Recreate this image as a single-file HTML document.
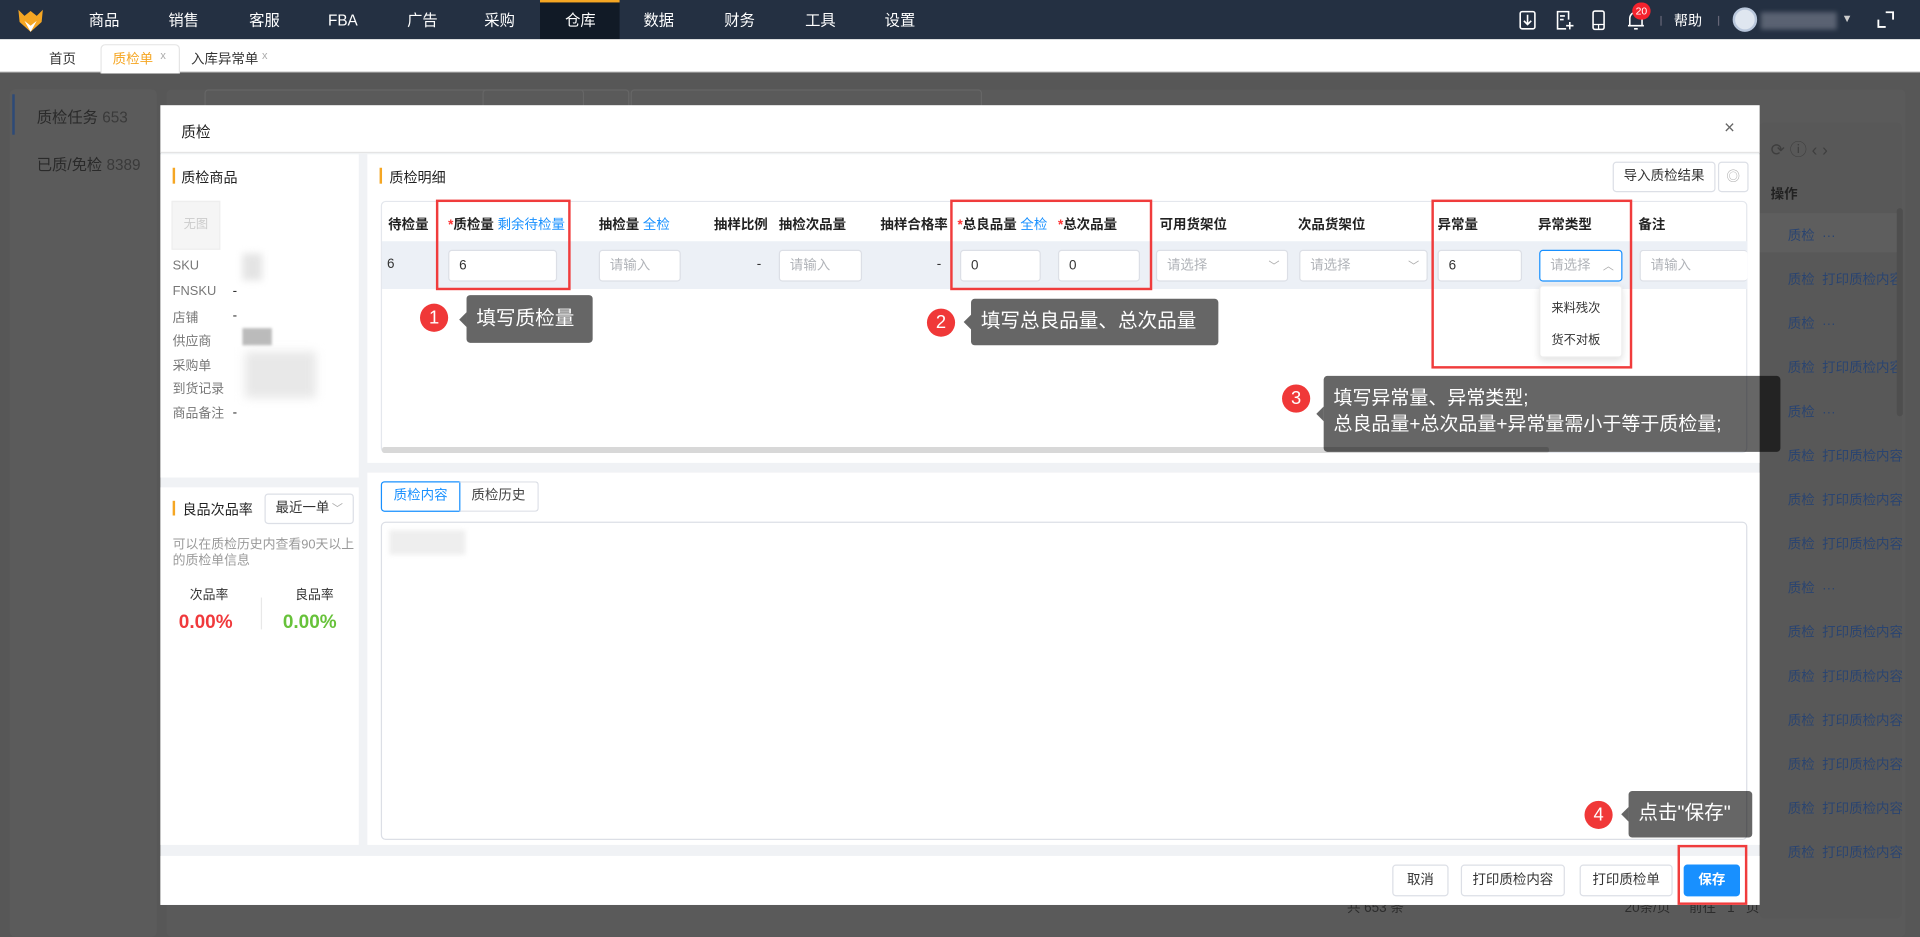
<!DOCTYPE html>
<html><head><meta charset="utf-8">
<style>
*{box-sizing:border-box;margin:0;padding:0}
html,body{width:1920px;height:937px;overflow:hidden;background:#575757}
#w{position:absolute;left:0;top:0;width:1568px;height:765px;transform:scale(1.224490);transform-origin:0 0;font-family:"Liberation Sans","Noto Sans CJK SC",sans-serif;font-size:11px;color:#333;background:#575757}
.a{position:absolute}
.nav{left:0;top:0;width:1568px;height:32px;background:#243042}
.ni{top:0;height:32px;line-height:34px;color:#fff;font-size:12.5px;text-align:center;width:64px}
.tabbar{left:0;top:32px;width:1568px;height:27px;background:#fff;border-bottom:1px solid #ddd}
.modal{left:131px;top:86px;width:1306px;height:653px;background:#f0f2f5}
.wh{background:#fff}
.inp{background:#fff;border:1px solid #dcdfe6;border-radius:3px;height:26px;line-height:24px;padding-left:8px;font-size:11px;color:#333}
.ph{color:#b0b3b8}
.th{top:175px;font-size:11px;color:#222;font-weight:bold}
.blue{color:#1890ff;font-weight:normal}
.req{color:#f33}
.rb{border:2px solid #f03c3c}
.circ{width:23px;height:23px;border-radius:50%;background:#f03838;color:#fff;text-align:center;line-height:23px;font-size:15px}
.tip{background:rgba(0,0,0,.6);color:#fff;border-radius:3px;font-size:16px}
.tip:before{content:"";position:absolute;left:-6px;top:50%;margin-top:-6px;border:6px solid transparent;border-left:0;border-right-color:rgba(0,0,0,.6)}
.lbl{left:141px;font-size:10.5px;color:#777}
.btn{top:706px;height:26px;line-height:24px;border:1px solid #dcdfe6;border-radius:3px;background:#fff;text-align:center;font-size:11px;color:#333}
.bg{color:#2a4470;font-size:11px}
.arr{color:#aaa;font-size:9px}
</style></head><body><div id="w">
<div class="a nav"></div>
<svg class="a" style="left:14px;top:6px" width="22" height="22" viewBox="0 0 22 22"><path d="M1 2 L6 7 L11 3 L16 7 L21 2 L20 12 L11 20 L2 12Z" fill="#f5a623"/><path d="M6 11 L11 15 L16 11 L11 20Z" fill="#fff"/></svg>
<div class="a ni" style="left:53px">商品</div><div class="a ni" style="left:118px">销售</div><div class="a ni" style="left:184px">客服</div><div class="a ni" style="left:248px">FBA</div><div class="a ni" style="left:313px">广告</div><div class="a ni" style="left:376px">采购</div>
<div class="a" style="left:441px;top:0;width:65px;height:32px;background:#111a26;border-top:2px solid #f5a623"></div><div class="a ni" style="left:442px">仓库</div>
<div class="a ni" style="left:506px">数据</div><div class="a ni" style="left:572px">财务</div><div class="a ni" style="left:638px">工具</div><div class="a ni" style="left:703px">设置</div>
<svg class="a" style="left:1240px;top:8px" width="16" height="17"><rect x="1.5" y="1.5" width="12" height="14" rx="1.5" fill="none" stroke="#fff" stroke-width="1.3"/><path d="M7.5 4v8M4.5 9l3 3 3-3" stroke="#fff" fill="none" stroke-width="1.3"/></svg>
<svg class="a" style="left:1270px;top:8px" width="16" height="17"><path d="M11 8V1.5H2v14h7" fill="none" stroke="#fff" stroke-width="1.3"/><path d="M4 5h4M4 8h3M12 10v6M9 13h6" stroke="#fff" stroke-width="1.3"/></svg>
<svg class="a" style="left:1299px;top:8px" width="14" height="17"><rect x="2" y="1" width="9" height="15" rx="1.5" fill="none" stroke="#fff" stroke-width="1.3"/><path d="M2 12h9M6.5 12v4" stroke="#fff" stroke-width="1"/></svg>
<svg class="a" style="left:1328px;top:8px" width="16" height="17"><path d="M3 13V7a5 5 0 0 1 10 0v6zM1.5 13h13M6.5 15.5h3" fill="none" stroke="#fff" stroke-width="1.3"/></svg>
<div class="a" style="left:1333px;top:2px;width:15px;height:14px;border-radius:7px;background:#f5222d;color:#fff;font-size:8.5px;text-align:center;line-height:14px">20</div>
<div class="a" style="left:1356px;top:13px;width:1px;height:8px;background:#667"></div>
<div class="a" style="left:1367px;top:9px;color:#fff;font-size:11.5px">帮助</div>
<div class="a" style="left:1403px;top:13px;width:1px;height:8px;background:#667"></div>
<div class="a" style="left:1415px;top:6px;width:20px;height:20px;border-radius:50%;background:#dfe6f0;border:2px solid #b9c7dc"></div>
<div class="a" style="left:1438px;top:10px;width:62px;height:14px;background:#5a6272;filter:blur(2px)"></div>
<div class="a" style="left:1504px;top:10px;color:#ccc;font-size:9px">▼</div>
<svg class="a" style="left:1532px;top:8px" width="16" height="16"><path d="M2 8v6h6M14 8V2H8" fill="none" stroke="#fff" stroke-width="1.5"/></svg>
<div class="a tabbar"></div>
<div class="a" style="left:40px;top:40px;font-size:11px">首页</div>
<div class="a" style="left:82px;top:36px;width:65px;height:24px;background:#fff;border:1px solid #e5e5e5;border-bottom:none;border-radius:4px 4px 0 0"></div>
<div class="a" style="left:92px;top:40px;font-size:11px;color:#f5a623">质检单</div><div class="a" style="left:131px;top:40px;color:#aaa;font-size:9px">x</div>
<div class="a" style="left:156px;top:40px;font-size:11px">入库异常单</div><div class="a" style="left:214px;top:40px;color:#aaa;font-size:9px">x</div>
<!-- behind page -->
<div class="a" style="left:8px;top:73px;width:120px;height:692px;background:#5b5b5b;border-radius:4px"></div>
<div class="a" style="left:10px;top:77px;width:2px;height:33px;background:#2d4a78"></div>
<div class="a" style="left:30px;top:85px;font-size:12.5px;color:#2a2a2a">质检任务 <span style="color:#3a3a3a">653</span></div>
<div class="a" style="left:30px;top:124px;font-size:12.5px;color:#2a2a2a">已质/免检 <span style="color:#3a3a3a">8389</span></div>
<div class="a" style="left:136px;top:73px;width:1420px;height:692px;background:#5a5a5a;border-radius:4px"></div>
<div class="a" style="left:167px;top:73px;width:310px;height:24px;border:1px solid #666;border-radius:3px"></div>
<div class="a" style="left:394px;top:73px;width:120px;height:24px;border:1px solid #666;border-radius:3px"></div>
<div class="a" style="left:515px;top:73px;width:287px;height:24px;border:1px solid #666;border-radius:3px"></div>
<div class="a" style="left:1437px;top:100px;width:116px;height:650px;background:#585858;border-radius:4px"></div>
<div class="a" style="left:1446px;top:150px;font-size:11px;color:#222;font-weight:bold">操作</div>
<div class="a" style="left:1437px;top:174px;width:115px;height:32px;background:#5e5e5e"></div>
<div class="a bg" style="left:1446px;top:112px;font-size:14px;color:#3e3e3e">⟳ ⓘ ‹ ›</div>
<div class="a bg" style="left:1460px;top:184px">质检 &nbsp;···</div>
<div class="a bg" style="left:1460px;top:220px">质检 &nbsp;打印质检内容</div>
<div class="a bg" style="left:1460px;top:256px">质检 &nbsp;···</div>
<div class="a bg" style="left:1460px;top:292px">质检 &nbsp;打印质检内容</div>
<div class="a bg" style="left:1460px;top:328px">质检 &nbsp;···</div>
<div class="a bg" style="left:1460px;top:364px">质检 &nbsp;打印质检内容</div>
<div class="a bg" style="left:1460px;top:400px">质检 &nbsp;打印质检内容</div>
<div class="a bg" style="left:1460px;top:436px">质检 &nbsp;打印质检内容</div>
<div class="a bg" style="left:1460px;top:472px">质检 &nbsp;···</div>
<div class="a bg" style="left:1460px;top:508px">质检 &nbsp;打印质检内容</div>
<div class="a bg" style="left:1460px;top:544px">质检 &nbsp;打印质检内容</div>
<div class="a bg" style="left:1460px;top:580px">质检 &nbsp;打印质检内容</div>
<div class="a bg" style="left:1460px;top:616px">质检 &nbsp;打印质检内容</div>
<div class="a bg" style="left:1460px;top:652px">质检 &nbsp;打印质检内容</div>
<div class="a bg" style="left:1460px;top:688px">质检 &nbsp;打印质检内容</div>
<div class="a" style="left:1549px;top:170px;width:5px;height:170px;background:#4e4e4e;border-radius:3px"></div>
<div class="a" style="left:1100px;top:733px;color:#2c2c2c;font-size:11px">共 653 条 &nbsp;&nbsp;&nbsp;&nbsp;&nbsp;&nbsp;&nbsp;&nbsp;&nbsp;&nbsp;&nbsp;&nbsp;&nbsp;&nbsp;&nbsp;&nbsp;&nbsp;&nbsp;&nbsp;&nbsp;&nbsp;&nbsp;&nbsp;&nbsp;&nbsp;&nbsp;&nbsp;&nbsp;&nbsp;&nbsp;&nbsp;&nbsp;&nbsp;&nbsp;&nbsp;&nbsp;&nbsp;&nbsp;&nbsp;&nbsp;&nbsp;&nbsp;&nbsp;&nbsp;&nbsp;&nbsp;&nbsp;&nbsp;&nbsp;&nbsp;&nbsp;&nbsp;&nbsp;&nbsp;&nbsp;&nbsp;&nbsp;&nbsp;20条/页 &nbsp;&nbsp;&nbsp;&nbsp;前往 &nbsp;&nbsp;1&nbsp;&nbsp; 页</div>
<!-- modal -->
<div class="a modal"></div>
<div class="a wh" style="left:131px;top:86px;width:1306px;height:39px;border-bottom:1px solid #e4e4e4"></div>
<div class="a" style="left:148px;top:99px;font-size:12px;color:#222">质检</div>
<div class="a" style="left:1408px;top:96px;font-size:15px;color:#666">×</div>
<div class="a wh" style="left:131px;top:126px;width:162px;height:264px"></div>
<div class="a wh" style="left:131px;top:398px;width:162px;height:292px"></div>
<div class="a wh" style="left:300px;top:126px;width:1137px;height:252px"></div>
<div class="a wh" style="left:300px;top:386px;width:1137px;height:304px"></div>
<div class="a wh" style="left:131px;top:699px;width:1306px;height:40px"></div>
<!-- left panel -->
<div class="a" style="left:141px;top:137px;width:2px;height:13px;background:#f5a623"></div>
<div class="a" style="left:148px;top:137px;font-size:11.5px;color:#222">质检商品</div>
<div class="a" style="left:140px;top:164px;width:40px;height:40px;background:#f5f5f5;border:1px solid #eee;color:#ccc;font-size:10px;text-align:center;line-height:38px">无图</div>
<div class="a lbl" style="top:211px">SKU</div><div class="a lbl" style="top:232px">FNSKU</div><div class="a lbl" style="top:252px">店铺</div><div class="a lbl" style="top:271px">供应商</div><div class="a lbl" style="top:291px">采购单</div><div class="a lbl" style="top:310px">到货记录</div><div class="a lbl" style="top:330px">商品备注</div>
<div class="a" style="left:190px;top:232px">-</div><div class="a" style="left:190px;top:252px">-</div><div class="a" style="left:190px;top:331px">-</div>
<div class="a" style="left:198px;top:207px;width:16px;height:22px;background:#e4e4e4;filter:blur(3px)"></div>
<div class="a" style="left:198px;top:268px;width:24px;height:14px;background:#bbb;filter:blur(1px)"></div>
<div class="a" style="left:200px;top:287px;width:58px;height:38px;background:#e8e8e8;filter:blur(4px)"></div>
<div class="a" style="left:141px;top:409px;width:2px;height:12px;background:#f5a623"></div>
<div class="a" style="left:149px;top:408px;font-size:11.5px;color:#222">良品次品率</div>
<div class="a inp" style="left:216px;top:403px;width:73px;height:25px;line-height:23px">最近一单<span class="arr" style="position:absolute;right:8px">﹀</span></div>
<div class="a" style="left:141px;top:439px;width:150px;font-size:10.5px;color:#999;line-height:13px">可以在质检历史内查看90天以上的质检单信息</div>
<div class="a" style="left:155px;top:478px;font-size:10.5px">次品率</div><div class="a" style="left:241px;top:478px;font-size:10.5px">良品率</div>
<div class="a" style="left:213px;top:488px;width:1px;height:26px;background:#e8e8e8"></div>
<div class="a" style="left:146px;top:500px;font-size:15.5px;font-weight:bold;color:#f0393c">0.00%</div>
<div class="a" style="left:231px;top:500px;font-size:15.5px;font-weight:bold;color:#67c23a">0.00%</div>
<!-- right top -->
<div class="a" style="left:310px;top:137px;width:2px;height:13px;background:#f5a623"></div>
<div class="a" style="left:318px;top:137px;font-size:11.5px;color:#222">质检明细</div>
<div class="a inp" style="left:1317px;top:132px;width:84px;height:25px;line-height:23px;padding:0;text-align:center">导入质检结果</div>
<div class="a inp" style="left:1403px;top:132px;width:25px;height:25px;padding:0;text-align:center;color:#aaa">◎</div>
<div class="a" style="left:311px;top:164px;width:1116px;height:206px;border:1px solid #e4e7ed;border-radius:4px"></div>
<div class="a" style="left:312px;top:197px;width:1115px;height:39px;background:#ecf0f6"></div>
<div class="a" style="left:312px;top:365px;width:953px;height:5px;background:#d8d8d8;border-radius:2px"></div>
<div class="a th" style="left:317px">待检量</div>
<div class="a th" style="left:366px"><span class="req">*</span>质检量 <span class="blue">剩余待检量</span></div>
<div class="a th" style="left:489px">抽检量 <span class="blue">全检</span></div>
<div class="a th" style="left:583px">抽样比例</div>
<div class="a th" style="left:636px">抽检次品量</div>
<div class="a th" style="left:719px">抽样合格率</div>
<div class="a th" style="left:782px"><span class="req">*</span>总良品量 <span class="blue">全检</span></div>
<div class="a th" style="left:864px"><span class="req">*</span>总次品量</div>
<div class="a th" style="left:947px">可用货架位</div>
<div class="a th" style="left:1060px">次品货架位</div>
<div class="a th" style="left:1174px">异常量</div>
<div class="a th" style="left:1256px">异常类型</div>
<div class="a th" style="left:1338px">备注</div>
<div class="a" style="left:316px;top:210px">6</div>
<div class="a inp" style="left:366px;top:204px;width:89px">6</div>
<div class="a inp ph" style="left:489px;top:204px;width:67px">请输入</div>
<div class="a" style="left:618px;top:210px">-</div>
<div class="a inp ph" style="left:636px;top:204px;width:68px">请输入</div>
<div class="a" style="left:765px;top:210px">-</div>
<div class="a inp" style="left:784px;top:204px;width:66px">0</div>
<div class="a inp" style="left:864px;top:204px;width:67px">0</div>
<div class="a inp ph" style="left:944px;top:204px;width:108px">请选择<span class="arr" style="position:absolute;right:6px">﹀</span></div>
<div class="a inp ph" style="left:1061px;top:204px;width:105px">请选择<span class="arr" style="position:absolute;right:6px">﹀</span></div>
<div class="a inp" style="left:1174px;top:204px;width:69px">6</div>
<div class="a inp ph" style="left:1257px;top:204px;width:68px;border-color:#1890ff">请选择<span class="arr" style="position:absolute;right:6px">︿</span></div>
<div class="a inp ph" style="left:1339px;top:204px;width:88px;border-right:none">请输入</div>
<div class="a" style="left:1257px;top:233px;width:68px;height:59px;background:#fff;border:1px solid #eee;border-radius:3px;box-shadow:0 2px 6px rgba(0,0,0,.12)"></div>
<div class="a" style="left:1267px;top:243px;font-size:10px">来料残次</div>
<div class="a" style="left:1267px;top:269px;font-size:10px">货不对板</div>
<!-- right bottom -->
<div class="a" style="left:311px;top:393px;width:65px;height:25px;border:1px solid #1890ff;border-radius:3px 0 0 3px;color:#1890ff;text-align:center;line-height:23px">质检内容</div>
<div class="a" style="left:375px;top:393px;width:65px;height:25px;border:1px solid #dcdfe6;border-left:none;border-radius:0 3px 3px 0;text-align:center;line-height:23px;color:#444">质检历史</div>
<div class="a" style="left:311px;top:426px;width:1116px;height:260px;border:1px solid #dcdfe6;border-radius:4px;background:#fff"></div>
<div class="a" style="left:318px;top:433px;width:62px;height:20px;background:#eee;filter:blur(2px)"></div>
<!-- footer -->
<div class="a btn" style="left:1137px;width:46px">取消</div>
<div class="a btn" style="left:1193px;width:85px">打印质检内容</div>
<div class="a btn" style="left:1290px;width:76px">打印质检单</div>
<div class="a btn" style="left:1375px;width:46px;background:#1890ff;border-color:#1890ff;color:#fff;font-weight:bold">保存</div>
<!-- annotations -->
<div class="a rb" style="left:356px;top:163px;width:110px;height:74px"></div>
<div class="a rb" style="left:776px;top:163px;width:165px;height:74px"></div>
<div class="a rb" style="left:1169px;top:163px;width:164px;height:138px"></div>
<div class="a rb" style="left:1370px;top:690px;width:57px;height:49px"></div>
<div class="a circ" style="left:343px;top:248px">1</div>
<div class="a tip" style="left:381px;top:241px;width:103px;height:39px;line-height:39px;padding-left:8px">填写质检量</div>
<div class="a circ" style="left:757px;top:252px">2</div>
<div class="a tip" style="left:793px;top:244px;width:202px;height:38px;line-height:38px;padding-left:8px">填写总良品量、总次品量</div>
<div class="a circ" style="left:1047px;top:314px">3</div>
<div class="a tip" style="left:1081px;top:307px;width:373px;height:62px;font-size:15.5px;line-height:21px;padding:8px 0 0 8px">填写异常量、异常类型;<br>总良品量+总次品量+异常量需小于等于质检量;</div>
<div class="a circ" style="left:1294px;top:654px">4</div>
<div class="a tip" style="left:1330px;top:646px;width:101px;height:38px;line-height:38px;padding-left:8px">点击"保存"</div>
</div></body></html>
